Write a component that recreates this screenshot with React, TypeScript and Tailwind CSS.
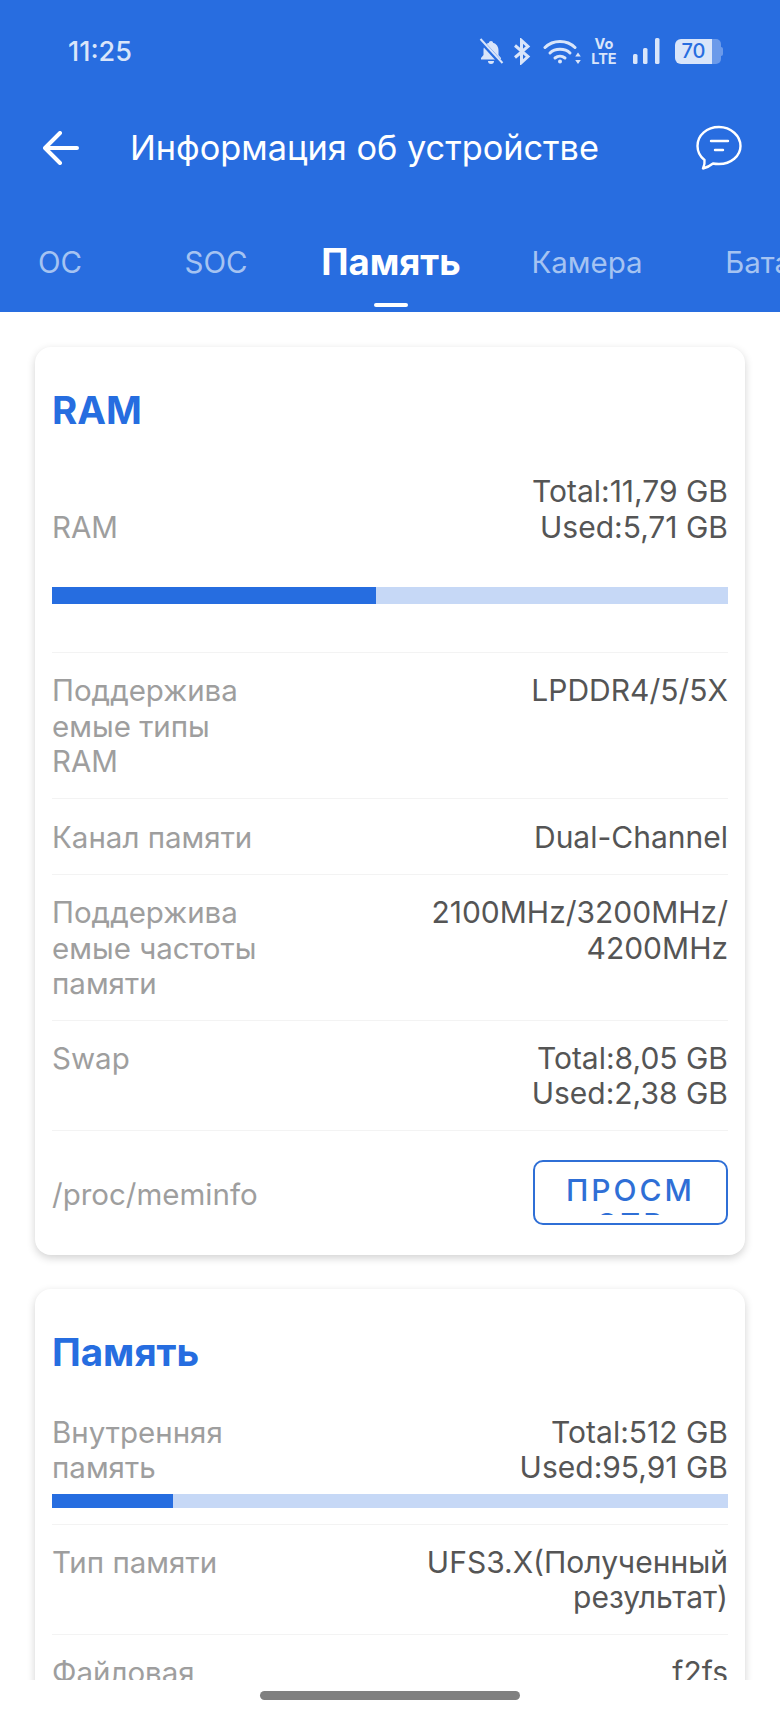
const font = { fontFamily: "Inter, Roboto, sans-serif" };

const BellMuted = () => (
  <svg width="26" height="27" viewBox="0 0 26 27" fill="#d9e5fa">
    <path d="M13 3c-1.200 0-2 .8-2 1.800-3.500 1-5.500 4-5.500 7.600v4.600L3 20v1.500h20V20l-2.500-3v-4.600c0-3.600-2-6.600-5.500-7.600C15 3.800 14.200 3 13 3z" />
    <path d="M10 23h6a3 3 0 0 1-6 0z" />
    <path d="M2 2l22 24" stroke="#286de0" strokeWidth="4.500" />
    <path d="M2.500 1l22 24" stroke="#d9e5fa" strokeWidth="2" />
  </svg>
);

const BluetoothIcon = () => (
  <svg width="18" height="27" viewBox="0 0 18 27" fill="none" stroke="#d9e5fa" strokeWidth="3">
    <path d="M2 7.500l13 11-6.500 6V2.500l6.500 6-13 11" />
  </svg>
);

const WifiIcon = () => (
  <svg width="38" height="27" viewBox="0 0 38 27" fill="none" stroke="#d9e5fa" strokeWidth="3" strokeLinecap="round">
    <path d="M2 9.500c8-8 22-8 30 0" />
    <path d="M7 15c5-5 15-5 20 0" />
    <path d="M12 20c3-2.500 7-2.500 10 0" />
    <circle cx="17" cy="23.500" r="2" fill="#d9e5fa" stroke="none" />
    <path d="M35 14.500l-2.800 4h5.600zM35 26l-2.800-4h5.600z" fill="#d9e5fa" stroke="none" />
  </svg>
);

const SignalIcon = () => (
  <svg width="29" height="27" viewBox="0 0 29 27" fill="#d9e5fa">
    <rect x="1" y="16" width="4.500" height="10" rx="1.500" />
    <rect x="11" y="10" width="4.500" height="16" rx="1.500" />
    <rect x="23" y="0" width="4.500" height="26" rx="1.500" />
  </svg>
);

const Battery = () => (
  <div className="flex h-[25px] w-[48px] items-center">
    <div className="flex h-full w-[37px] items-center justify-center rounded-l-[6px] bg-[#d9e5fa] text-[20px] font-medium text-[#286de0]">
      70
    </div>
    <div className="h-full w-[9px] rounded-r-[5px] bg-[#6b9aea]" />
    <div className="h-[9px] w-[2px] rounded-r-full bg-[#6b9aea]" />
  </div>
);

const ChatIcon = () => (
  <svg width="46" height="46" viewBox="0 0 46 46" fill="none" stroke="white" strokeWidth="2.400" strokeLinecap="round" strokeLinejoin="round">
    <path d="M23 2C11 2 1.500 10 1.500 21c0 5.500 2.500 10.500 7 14 .5 3-.5 6-1.500 8.500 4-1 7.500-3 10-5 2 .5 4 .5 6 .5 12 0 21.500-8 21.500-18S35 2 23 2z" />
    <path d="M15 16h17M19 25h8" />
  </svg>
);

const Divider = () => <div className="h-px bg-[#f3f3f3]" />;

const InfoRow = ({ label, value, single }: { label: string; value: string; single?: boolean }) => (
  <>
    <Divider />
    <div className={`flex items-start justify-between ${single ? "pb-[19px] pt-[21px]" : "pb-[18px] pt-[20px]"}`}>
      <div className="w-[205px] whitespace-pre-line text-[29.5px] text-[#9e9e9e]">{label}</div>
      <div className="flex-1 whitespace-pre-line text-right text-[#555555]">{value}</div>
    </div>
  </>
);

const ProgressBar = ({ percent, height }: { percent: number; height: string }) => (
  <div className={`w-full bg-[#c6d8f6] ${height}`}>
    <div className="h-full bg-[#266de0]" style={{ width: `${percent}%` }} />
  </div>
);

const tabs = [
  { name: "ОС", width: "w-[156px]" },
  { name: "SOC", width: "w-[156px]" },
  { name: "Память", width: "w-[194px]", active: true },
  { name: "Камера", width: "w-[198px]" },
  { name: "Батарея", width: "w-[196px]" },
];

export default function App() {
  return (
    <div className="flex h-[1715px] w-[780px] flex-col overflow-hidden bg-white text-[30px] leading-[35.5px]" style={font}>
      <header className="h-[312px] shrink-0 overflow-hidden bg-[#286de0]">
        <div className="flex items-center justify-between pl-[68px] pr-[57px] pt-[34px]">
          <span className="text-[27px] font-medium text-[#d9e5fa]">11:25</span>
          <div className="flex items-center">
            <BellMuted />
            <div className="ml-[9px]">
              <BluetoothIcon />
            </div>
            <div className="ml-[12px]">
              <WifiIcon />
            </div>
            <div className="ml-[10px] flex w-[26px] flex-col items-center text-[14.500px] font-bold leading-[14.500px] text-[#d9e5fa]">
              <span>Vo</span>
              <span>LTE</span>
            </div>
            <div className="ml-[15px]">
              <SignalIcon />
            </div>
            <div className="ml-[14px]">
              <Battery />
            </div>
          </div>
        </div>
        <div className="mt-[55px] flex items-center justify-between pl-[43px] pr-[38px]">
          <div className="flex items-center">
            <svg width="36" height="34" viewBox="0 0 36 34" fill="none" stroke="white" strokeWidth="4" strokeLinecap="round" strokeLinejoin="round">
              <path d="M34 17H3M17 2L2 17l15 15" />
            </svg>
            <h1 className="ml-[51px] text-[34.300px] leading-[40px] text-white">Информация об устройстве</h1>
          </div>
          <ChatIcon />
        </div>
        <nav className="-ml-[18px] mt-[68px] flex whitespace-nowrap">
          {tabs.map((tab) => (
            <div key={tab.name} className={`shrink-0 text-center ${tab.width}`}>
              <div className={tab.active ? "text-[36.500px] font-bold leading-[46px] text-white" : "text-[29.500px] leading-[46px] text-[#a5c3f2]"}>
                {tab.name}
              </div>
              {tab.active && (
                <div className="mx-auto mt-[18px] h-[4px] w-[34px] rounded-full bg-white" />
              )}
            </div>
          ))}
        </nav>
      </header>

      <main className="h-[1368px] shrink-0 overflow-hidden px-[35px] pt-[35px]">
        <section className="rounded-[16px] bg-white px-[17px] pb-[30px] shadow-[0_3px_8px_rgba(0,0,0,0.18)]">
          <h2 className="pb-[41px] pt-[40px] text-[38.500px] font-bold leading-[46px] text-[#266de0]">RAM</h2>
          <div className="flex items-end justify-between">
            <div className="text-[29.5px] text-[#9e9e9e]">RAM</div>
            <div className="text-right text-[#555555]">
              Total:11,79 GB
              <br />
              Used:5,71 GB
            </div>
          </div>
          <div className="pb-[48px] pt-[42px]">
            <ProgressBar percent={47.9} height="h-[17px]" />
          </div>
          <InfoRow label={"Поддержива\nемые типы\nRAM"} value="LPDDR4/5/5X" />
          <InfoRow label="Канал памяти" value="Dual-Channel" single />
          <InfoRow label={"Поддержива\nемые частоты\nпамяти"} value={"2100MHz/3200MHz/\n4200MHz"} />
          <InfoRow label="Swap" value={"Total:8,05 GB\nUsed:2,38 GB"} />
          <Divider />
          <div className="flex items-center justify-between pt-[29px]">
            <div className="pt-[5px] text-[29.5px] text-[#9e9e9e]">/proc/meminfo</div>
            <button className="flex h-[65px] w-[195px] justify-center rounded-[10px] border-2 border-[#2f6fd6] text-[#2f6fd6]">
              <div className="mt-[11px] h-[42px] overflow-hidden text-[30px] font-medium leading-[34px] tracking-[3px]">
                ПРОСМ
                <br />
                ОТР
              </div>
            </button>
          </div>
        </section>

        <section className="mt-[34px] rounded-[16px] bg-white px-[17px] shadow-[0_3px_8px_rgba(0,0,0,0.18)]">
          <h2 className="pb-[40px] pt-[40px] text-[38.500px] font-bold leading-[46px] text-[#266de0]">Память</h2>
          <div className="flex items-end justify-between">
            <div className="w-[205px] text-[29.5px] text-[#9e9e9e]">Внутренняя память</div>
            <div className="text-right text-[#555555]">
              Total:512 GB
              <br />
              Used:95,91 GB
            </div>
          </div>
          <div className="pb-[16px] pt-[8px]">
            <ProgressBar percent={17.9} height="h-[14px]" />
          </div>
          <InfoRow label="Тип памяти" value={"UFS3.X(Полученный\nрезультат)"} />
          <InfoRow label={"Файловая\nсистема"} value="f2fs" />
        </section>
      </main>

      <footer className="flex flex-1 items-center justify-center pb-[5px]">
        <div className="h-[9px] w-[260px] rounded-full bg-[#808080]" />
      </footer>
    </div>
  );
}
